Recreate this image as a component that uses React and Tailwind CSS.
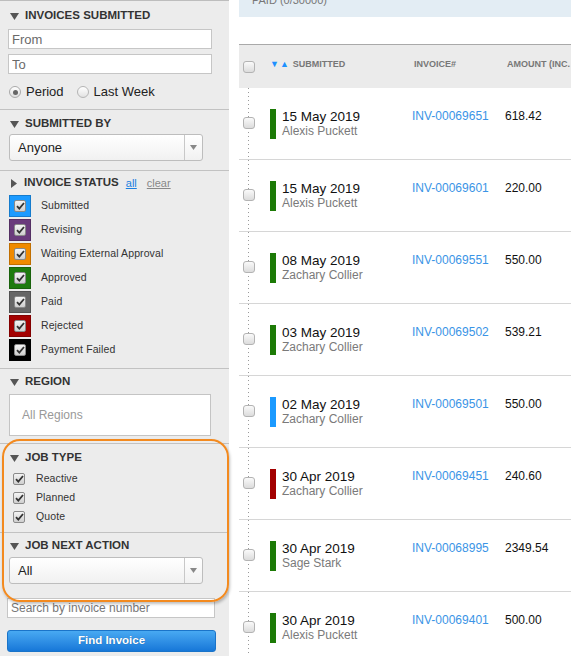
import React from 'react';

const font = "font-['Liberation_Sans',Arial,sans-serif]";

const Tri = ({ right }) =>
  right ? (
    <svg width="8" height="9" viewBox="0 0 8 9" className="shrink-0">
      <path d="M1 0 L7 4.5 L1 9 Z" fill="#555" />
    </svg>
  ) : (
    <svg width="9" height="7" viewBox="0 0 9 7" className="shrink-0">
      <path d="M0 0 L9 0 L4.5 7 Z" fill="#555" />
    </svg>
  );

const Check = ({ size = 12 }) => (
  <div
    className="flex items-center justify-center rounded-[2px] border border-[#8a8a8a] bg-gradient-to-b from-[#f4f4f4] to-[#cfcfcf]"
    style={{ width: size, height: size }}
  >
    <svg width="9" height="8" viewBox="0 0 9 8">
      <path d="M1 4.2 L3.3 6.6 L8 1" fill="none" stroke="#333" strokeWidth="1.8" />
    </svg>
  </div>
);

const BoxCheck = () => (
  <div className="h-[12px] w-[12px] rounded-[3px] border border-[#b3b3b3] bg-gradient-to-b from-[#fafafa] to-[#dcdcdc]" />
);

const Heading = ({ children, right, extra }) => (
  <div className="flex h-[14px] items-center gap-[6px] pl-[10px]">
    <Tri right={right} />
    <span className="text-[11.5px] font-bold leading-none text-[#333]">{children}</span>
    {extra}
  </div>
);

const Select = ({ value }) => (
  <div className="ml-[9px] flex h-[27px] w-[194px] items-stretch rounded-[3px] border border-[#bdbdbd] bg-gradient-to-b from-white to-[#f1f1f1]">
    <div className="flex flex-1 items-center pl-[8px] text-[13px] text-[#222]">{value}</div>
    <div className="flex w-[18px] items-center justify-center border-l border-[#c8c8c8]">
      <svg width="7" height="5" viewBox="0 0 7 5">
        <path d="M0 0 L7 0 L3.5 5 Z" fill="#888" />
      </svg>
    </div>
  </div>
);

const statuses = [
  ['Submitted', '#1b9aff'],
  ['Revising', '#6a3b7c'],
  ['Waiting External Approval', '#f08a00'],
  ['Approved', '#1e7a0e'],
  ['Paid', '#666666'],
  ['Rejected', '#a30000'],
  ['Payment Failed', '#000000'],
];

const rows = [
  ['15 May 2019', 'Alexis Puckett', 'INV-00069651', '618.42', '#1c7a06'],
  ['15 May 2019', 'Alexis Puckett', 'INV-00069601', '220.00', '#1c7a06'],
  ['08 May 2019', 'Zachary Collier', 'INV-00069551', '550.00', '#1c7a06'],
  ['03 May 2019', 'Zachary Collier', 'INV-00069502', '539.21', '#1c7a06'],
  ['02 May 2019', 'Zachary Collier', 'INV-00069501', '550.00', '#1b9aff'],
  ['30 Apr 2019', 'Zachary Collier', 'INV-00069451', '240.60', '#a30000'],
  ['30 Apr 2019', 'Sage Stark', 'INV-00068995', '2349.54', '#1c7a06'],
  ['30 Apr 2019', 'Alexis Puckett', 'INV-00069401', '500.00', '#1c7a06'],
];

const inputCls =
  'block h-[20px] border border-[#c6c6c6] bg-white px-[3px] text-[13px] text-[#333] outline-none placeholder:text-[#6a6a6a]';

const Sidebar = () => (
  <div className="relative flex h-[656px] w-[229px] shrink-0 flex-col border-t border-[#bdbdbd] bg-[#ececec]">
    {/* invoices submitted */}
    <div className="h-[109px] border-b border-[#c2c2c2] pt-[8px]">
      <Heading>INVOICES SUBMITTED</Heading>
      <input placeholder="From" className={`${inputCls} ml-[8px] mt-[6px] w-[204px]`} />
      <input placeholder="To" className={`${inputCls} ml-[8px] mt-[5px] w-[204px]`} />
      <div className="mt-[10px] flex h-[16px] items-center pl-[9px] text-[13px] text-[#222]">
        <div className="flex h-[12px] w-[12px] items-center justify-center rounded-full border border-[#aaa] bg-gradient-to-b from-white to-[#ddd]">
          <div className="h-[5px] w-[5px] rounded-full bg-[#666]" />
        </div>
        <span className="ml-[5px]">Period</span>
        <div className="ml-[13px] h-[12px] w-[12px] rounded-full border border-[#b5b5b5] bg-gradient-to-b from-white to-[#e2e2e2]" />
        <span className="ml-[5px]">Last Week</span>
      </div>
    </div>

    {/* submitted by */}
    <div className="h-[61px] border-b border-[#c2c2c2] pt-[7px]">
      <Heading>SUBMITTED BY</Heading>
      <div className="mt-[3px]">
        <Select value="Anyone" />
      </div>
    </div>

    {/* invoice status */}
    <div className="h-[198px] border-b border-[#c2c2c2] pt-[5px]">
      <Heading
        right
        extra={
          <span className="ml-[1px] flex gap-[10px] text-[11px] font-normal">
            <span className="text-[#1b7fe0] underline">all</span>
            <span className="text-[#888] underline">clear</span>
          </span>
        }
      >
        INVOICE STATUS
      </Heading>
      <div className="mt-[5px] flex flex-col gap-[2px] pl-[9px]">
        {statuses.map(([label, color]) => (
          <div key={label} className="flex h-[22px] items-center">
            <div
              className="flex h-[22px] w-[22px] items-center justify-center border border-black/20"
              style={{ backgroundColor: color }}
            >
              <Check />
            </div>
            <span className="ml-[10px] text-[10.5px] tracking-[0.1px] text-[#333]">{label}</span>
          </div>
        ))}
      </div>
    </div>

    {/* region */}
    <div className="h-[75px] border-b border-[#c2c2c2] pt-[6px]">
      <Heading>REGION</Heading>
      <div className="ml-[9px] mt-[5px] flex h-[42px] w-[202px] items-center border border-[#c4c4c4] bg-white pl-[12px] text-[12px] text-[#999]">
        All Regions
      </div>
    </div>

    {/* job type */}
    <div className="h-[89px] border-b border-[#c2c2c2] pt-[7px]">
      <Heading>JOB TYPE</Heading>
      <div className="mt-[4px] flex flex-col pl-[13px]">
        {['Reactive', 'Planned', 'Quote'].map((t) => (
          <div key={t} className="flex h-[19px] items-center">
            <Check />
            <span className="ml-[11px] text-[10.5px] tracking-[0.1px] text-[#333]">{t}</span>
          </div>
        ))}
      </div>
    </div>

    {/* job next action */}
    <div className="flex-1 pt-[6px]">
      <Heading>JOB NEXT ACTION</Heading>
      <div className="mt-[4px]">
        <Select value="All" />
      </div>
      <input
        placeholder="Search by invoice number"
        className="ml-[7px] mt-[14px] block h-[20px] w-[208px] border border-[#c6c6c6] bg-white px-[3px] text-[12px] outline-none placeholder:text-[#777]"
      />
      <button className="ml-[7px] mt-[12px] flex h-[22px] w-[209px] items-center justify-center rounded-[3px] border border-[#1a74c9] bg-gradient-to-b from-[#48a9f2] to-[#1677d8] text-[11.5px] font-bold text-white [text-shadow:0_0_1px_rgba(0,0,0,0.3)]">
        Find Invoice
      </button>
    </div>

    {/* highlight annotation */}
    <div className="pointer-events-none absolute left-[2px] top-[438px] h-[163px] w-[227px] rounded-[18px] border-2 border-[#f38a1f] shadow-[1px_2px_3px_rgba(0,0,0,0.25)]" />
  </div>
);

const Main = () => (
  <div className="ml-[10px] w-[332px] shrink-0 overflow-hidden">
    <div className="h-[17px] overflow-hidden bg-[#e3edf4] pl-[13px]">
      <div className="-mt-[8px] text-[11px] text-[#777]">PAID (0/30000)</div>
    </div>
    <div className="mt-[27px] grid h-[44px] grid-cols-[31px_142px_93px_1fr] items-center border-t border-[#a9a9a9] bg-[#ebebeb] text-[9px] font-bold text-[#777]">
      <div className="pl-[4px]">
        <BoxCheck />
      </div>
      <div className="-mt-[4px] flex items-center">
        <span className="text-[9px] tracking-[1px] text-[#1e90ff]">▼▲</span>
        <span className="ml-[3px]">SUBMITTED</span>
      </div>
      <div className="-mt-[4px] pl-[2px]">INVOICE#</div>
      <div className="-mt-[4px] whitespace-nowrap pl-[2px]">AMOUNT (INC.</div>
    </div>
    <div className="relative">
      <div className="absolute bottom-0 left-[9px] top-0 w-[1px] bg-[repeating-linear-gradient(to_bottom,#9a9a9a_0,#9a9a9a_1px,transparent_1px,transparent_4px)]" />
      {rows.map(([date, name, inv, amt, color], i) => (
        <div
          key={i}
          className="relative grid h-[72px] grid-cols-[31px_142px_93px_1fr] border-b border-[#d6d6d6]"
        >
          <div className="pl-[4px] pt-[29px]">
            <BoxCheck />
          </div>
          <div className="flex pt-[21px]">
            <div className="h-[30px] w-[6px]" style={{ backgroundColor: color }} />
            <div className="ml-[6px]">
              <div className="text-[13.5px] leading-[15px] text-[#111]">{date}</div>
              <div className="text-[12px] leading-[14px] text-[#7a7a7a]">{name}</div>
            </div>
          </div>
          <div className="pt-[21px] text-[12px] leading-[15px] text-[#3a94e6]">{inv}</div>
          <div className="pt-[21px] text-[12px] leading-[15px] text-[#111]">{amt}</div>
        </div>
      ))}
    </div>
  </div>
);

export default function App() {
  return (
    <div className={`${font} flex h-[656px] w-[571px] overflow-hidden bg-white`}>
      <Sidebar />
      <Main />
    </div>
  );
}
